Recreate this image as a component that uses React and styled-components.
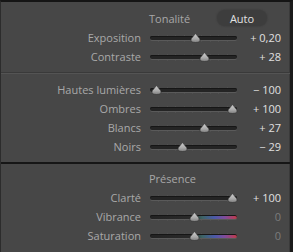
import React from "react";
import styled, { createGlobalStyle } from "styled-components";

const Global = createGlobalStyle`
  html, body { margin: 0; padding: 0; background: #474747; }
  body { font-family: "Open Sans", "Noto Sans", sans-serif; }
`;

const Panel = styled.div`
  width: 293px;
  height: 252px;
  box-sizing: border-box;
  background: #474747;
  border-top: 2px solid #151515;
  border-left: 1px solid #2c2c2c;
  border-right: 3px solid #1b1b1b;
  box-shadow: inset -1px 0 0 #3a3a3a;
  overflow: hidden;
`;

const Section = styled.div`
  padding-top: ${(p) => p.$top}px;
  padding-bottom: ${(p) => p.$bottom}px;
`;

const Header = styled.div`
  display: flex;
  align-items: center;
  height: 20px;
  padding-left: 148px;
  padding-right: 23px;
`;

const Title = styled.span`
  font-size: 11px;
  color: #a7a7a7;
`;

const AutoButton = styled.span`
  margin-left: auto;
  width: 50px;
  height: 16px;
  border-radius: 8px;
  background: #3d3d3d;
  box-shadow: 0 0 1px 1px rgba(61, 61, 61, 0.6);
  color: #e2e2e2;
  font-size: 11px;
  display: flex;
  align-items: center;
  justify-content: center;
`;

const Row = styled.div`
  display: grid;
  grid-template-columns: 140px 87px 1fr;
  column-gap: 9px;
  height: 19px;
  align-items: center;
  padding-right: 9px;
`;

const Label = styled.span`
  font-size: 11px;
  color: #a9a9a9;
  text-align: right;
  white-space: nowrap;
`;

const Value = styled.span`
  font-size: 11px;
  color: ${(p) => (p.$dim ? "#7c7c7c" : "#e0e0e0")};
  text-align: right;
  white-space: nowrap;
`;

const SliderBox = styled.div`
  position: relative;
  height: 19px;
`;

const Ticks = styled.div`
  position: absolute;
  left: 8px;
  right: 4px;
  top: 7px;
  height: 7px;
  background: repeating-linear-gradient(
    to right,
    rgba(95, 95, 95, 0.35) 0 1px,
    transparent 1px 8.6px
  );
`;

const Track = styled.div`
  position: absolute;
  left: 0;
  right: 0;
  top: 8px;
  height: 4px;
  border-radius: 2px;
  background: ${(p) =>
    p.$color
      ? "linear-gradient(to right, #232323 0%, #2a2a2a 48%, #3d6464 60%, #4a5aa8 74%, #7f4c9c 86%, #c23a48 100%)"
      : "#242424"};
  box-shadow: 0 1px 0 #5a5a5a, inset 0 1px 0 #161616;
`;

const ThumbSvg = styled.svg`
  position: absolute;
  top: 5px;
  width: 11px;
  height: 10px;
  margin-left: -5.5px;
`;

const MIN_X = 6;
const MAX_X = 82;

function Thumb({ pos }) {
  const left = MIN_X + ((pos + 1) / 2) * (MAX_X - MIN_X);
  return (
    <ThumbSvg viewBox="0 0 11 10" style={{ left }}>
      <defs>
        <linearGradient id="tg" x1="0" y1="0" x2="0" y2="1">
          <stop offset="0" stopColor="#d0d0d0" />
          <stop offset="0.6" stopColor="#a9a9a9" />
          <stop offset="1" stopColor="#7e7e7e" />
        </linearGradient>
      </defs>
      <path
        d="M5.5 0.5 L9.6 5.6 Q10.6 7.2 9.6 8.4 Q8.6 9.5 5.5 9.5 Q2.4 9.5 1.4 8.4 Q0.4 7.2 1.4 5.6 Z"
        fill="url(#tg)"
        stroke="#2e2e2e"
        strokeWidth="0.6"
      />
    </ThumbSvg>
  );
}

function Slider({ label, value, pos, color, dim }) {
  return (
    <Row>
      <Label>{label}</Label>
      <SliderBox>
        <Ticks />
        <Track $color={color} />
        <Thumb pos={pos} />
      </SliderBox>
      <Value $dim={dim}>{value}</Value>
    </Row>
  );
}

const Groove = styled.div`
  height: 1px;
  background: #3a3a3a;
  border-bottom: 1px solid #545454;
`;

const Black = styled.div`
  height: 2px;
  background: #161616;
`;

export default function App() {
  return (
    <>
      <Global />
      <Panel>
        <Section $top={6} $bottom={6}>
          <Header>
            <Title>Tonalité</Title>
            <AutoButton>Auto</AutoButton>
          </Header>
          <Slider label="Exposition" value="+ 0,20" pos={0.04} />
          <Slider label="Contraste" value="+ 28" pos={0.28} />
        </Section>
        <Groove />
        <Section $top={6} $bottom={6}>
          <Slider label="Hautes lumières" value="− 100" pos={-1} />
          <Slider label="Ombres" value="+ 100" pos={1} />
          <Slider label="Blancs" value="+ 27" pos={0.27} />
          <Slider label="Noirs" value="− 29" pos={-0.29} />
        </Section>
        <Black />
        <Section $top={4} $bottom={0}>
          <Header>
            <Title>Présence</Title>
          </Header>
          <Slider label="Clarté" value="+ 100" pos={1} />
          <Slider label="Vibrance" value="0" pos={0} color dim />
          <Slider label="Saturation" value="0" pos={0} color dim />
        </Section>
      </Panel>
    </>
  );
}
